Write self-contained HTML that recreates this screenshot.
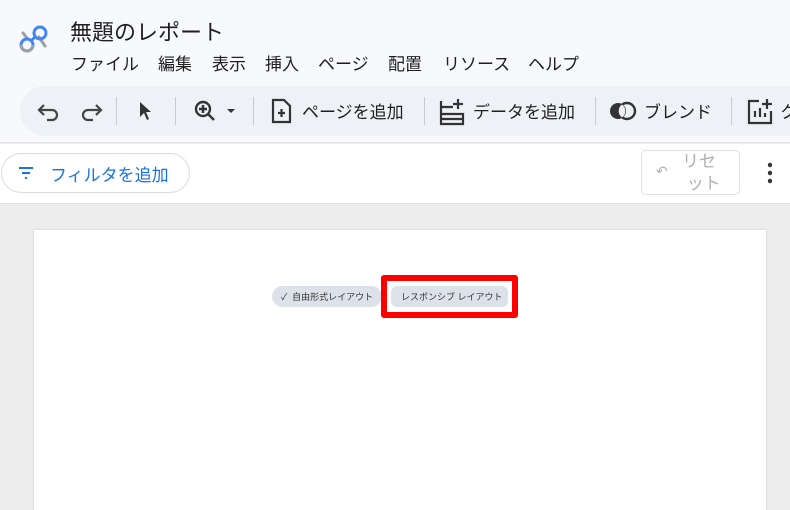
<!DOCTYPE html>
<html><head><meta charset="utf-8"><style>
*{margin:0;padding:0;box-sizing:border-box}
body{width:790px;height:497px;overflow:hidden;background:#ededed;font-family:"Liberation Sans","Noto Sans CJK JP",sans-serif;position:relative}
.hdr{position:absolute;left:0;top:0;width:790px;height:143px;background:#f8f9fc;border-bottom:1px solid #e3e3e3}
.title{position:absolute;left:70px;top:15px;font-size:22px;color:#1f1f1f}
.m{position:absolute;top:50px;font-size:17px;color:#1f1f1f;white-space:nowrap}
.tb{position:absolute;left:20px;top:86px;width:800px;height:50px;border-radius:25px;background:#eef1f6}
.sep{position:absolute;top:97px;width:1px;height:28px;background:#c8ccd2}
.tt{position:absolute;top:98px;font-size:17px;color:#1f1f1f;white-space:nowrap}
.fb{position:absolute;left:0;top:144px;width:790px;height:60px;background:#fff;border-bottom:1px solid #e0e0e0}
.fil{position:absolute;left:1px;top:153px;width:189px;height:40px;border:1px solid #dadce0;border-radius:20px;color:#1a73e8;font-size:17px;padding:7px 0 0 48px;white-space:nowrap}
.reset{position:absolute;left:641px;top:150px;width:99px;height:45px;border:1px solid #e0e0e0;border-radius:5px;color:#b0b0b0;font-size:17px}
.canvas{position:absolute;left:34px;top:230px;width:732px;height:280px;background:#fff;box-shadow:0 0 2px rgba(0,0,0,.15)}
.chip{position:absolute;top:286px;height:21px;border-radius:11px;background:#dde2ea;font-size:9px;color:#333;padding-top:4px;white-space:nowrap}
</style></head><body>
<div class="hdr"></div>
<svg style="position:absolute;left:17px;top:24px" width="36" height="36" viewBox="0 0 36 36">
<path d="M6 9 L10 14" stroke="#9aa0a6" stroke-width="3" fill="none" stroke-linecap="round"/>
<path d="M22 13 L28 22" stroke="#9aa0a6" stroke-width="3" fill="none" stroke-linecap="round"/>
<circle cx="10" cy="21" r="6" stroke="#4285f4" stroke-width="3" fill="none"/>
<circle cx="10" cy="21" r="6" stroke="#9aa0a6" stroke-width="3" fill="none" stroke-dasharray="19 40"/>
<circle cx="23" cy="9" r="6" stroke="#4285f4" stroke-width="3" fill="none"/>
<path d="M14 17 L19 12" stroke="#4285f4" stroke-width="3"/>
</svg>
<div class="title">無題のレポート</div>
<div class="m" style="left:71px">ファイル</div>
<div class="m" style="left:158px">編集</div>
<div class="m" style="left:212px">表示</div>
<div class="m" style="left:265px">挿入</div>
<div class="m" style="left:318px">ページ</div>
<div class="m" style="left:388px">配置</div>
<div class="m" style="left:443px">リソース</div>
<div class="m" style="left:528px">ヘルプ</div>
<div class="tb"></div>
<svg style="position:absolute;left:36px;top:98px" width="80" height="26" viewBox="0 0 80 26" fill="none" stroke="#444" stroke-width="2.2">
<path d="M8 7 L3 12 L8 17 M3 12 H16 a5 5 0 0 1 0 10 H11"/>
<path d="M60 7 L65 12 L60 17 M65 12 H52 a5 5 0 0 0 0 10 H57"/>
</svg>
<div class="sep" style="left:116px"></div>
<svg style="position:absolute;left:138px;top:101px" width="16" height="20"><path d="M2 1 L2 16 L6 12 L9 19 L11 18 L8 11 L13 11 Z" fill="#333"/></svg>
<div class="sep" style="left:175px"></div>
<svg style="position:absolute;left:193px;top:98px" width="50" height="26" fill="none" stroke="#333" stroke-width="2.4"><circle cx="10" cy="11" r="7"/><path d="M15 16 L21 22 M10 7 V15 M6 11 H14"/><path d="M34 11 H42 L38 15 Z" fill="#333" stroke="none"/></svg>
<div class="sep" style="left:253px"></div>
<svg style="position:absolute;left:271px;top:98px" width="22" height="26" fill="none" stroke="#333" stroke-width="2.2"><path d="M2 2 H13 L19 8 V24 H2 Z M7 15 H14 M10.5 11 V19"/></svg>
<div class="tt" style="left:302px">ページを追加</div>
<div class="sep" style="left:424px"></div>
<svg style="position:absolute;left:439px;top:97px" width="26" height="30" fill="none" stroke="#333" stroke-width="2.2"><path d="M2 4 V27 H24 V17 H2 M2 10 H14 M2 22 H24 M19 2 V12 M14 7 H24"/></svg>
<div class="tt" style="left:473px">データを追加</div>
<div class="sep" style="left:595px"></div>
<svg style="position:absolute;left:609px;top:100px" width="28" height="22"><circle cx="18" cy="11" r="8" fill="none" stroke="#333" stroke-width="2.4"/><circle cx="9" cy="11" r="8" fill="#333"/><path d="M13 4.5 A8 8 0 0 1 13 17.5 A8 8 0 0 1 13 4.5Z" fill="#eef1f6"/></svg>
<div class="tt" style="left:644px">ブレンド</div>
<div class="sep" style="left:731px"></div>
<svg style="position:absolute;left:747px;top:97px" width="30" height="28" fill="none" stroke="#333" stroke-width="2.2"><path d="M12 4 H2 V26 H24 V14 M20 2 V12 M15 7 H25 M8 20 V14 M13 20 V11 M18 20 V16"/></svg>
<div class="tt" style="left:780px">ク</div>
<div class="fb"></div>
<div class="fil">フィルタを追加</div>
<svg style="position:absolute;left:18px;top:166px" width="16" height="14"><path d="M1 2 H15 M4 7 H12 M7 12 H9" stroke="#1a73e8" stroke-width="2"/></svg>
<div class="reset"><span style="position:absolute;left:14px;top:12px;font-size:14px">↶</span><span style="position:absolute;left:40px;top:0px;line-height:22px;white-space:nowrap">リセ<br>&nbsp;ット</span></div>
<svg style="position:absolute;left:765px;top:162px" width="10" height="22"><circle cx="5" cy="3" r="2.2" fill="#333"/><circle cx="5" cy="11" r="2.2" fill="#333"/><circle cx="5" cy="19" r="2.2" fill="#333"/></svg>
<div class="canvas"></div>
<div class="chip" style="left:272px;width:110px;padding-left:9px">✓&nbsp; 自由形式レイアウト</div>
<div style="position:absolute;left:381px;top:275px;width:137px;height:43px;border:6px solid #f00;border-radius:3px;background:#fff"></div>
<div class="chip" style="left:391px;width:117px;padding-left:10px;border-radius:6px">レスポンシブ レイアウト</div>
</body></html>
